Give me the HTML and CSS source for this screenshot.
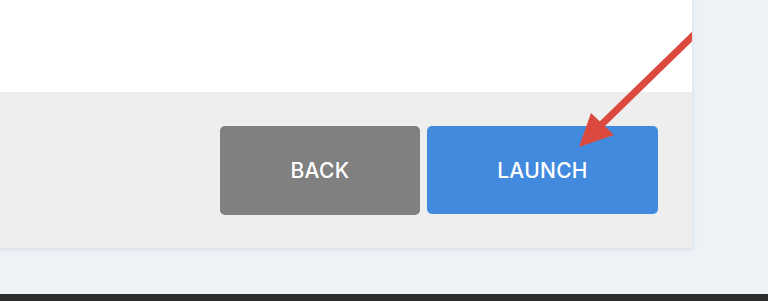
FILE: index.html
```html
<!DOCTYPE html>
<html>
<head>
<meta charset="utf-8">
<link rel="stylesheet" href="styles.css">
</head>
<body>
<div class="page">
  <div class="panel">
    <div class="content"></div>
    <div class="footer">
      <button class="btn btn-back">BACK</button>
      <button class="btn btn-launch">LAUNCH</button>
    </div>
    <svg class="arrow" width="692" height="248" viewBox="0 0 692 248" xmlns="http://www.w3.org/2000/svg">
      <line x1="702" y1="27" x2="598" y2="128" stroke="#dc4a3f" stroke-width="7"/>
      <polygon points="579,147 591,113 614,135" fill="#dc4a3f"/>
    </svg>
  </div>
  <div class="spacer"></div>
  <div class="taskbar"></div>
</div>
</body>
</html>
```

FILE: styles.css
```css
html, body {
  margin: 0;
  padding: 0;
  width: 768px;
  height: 301px;
  overflow: hidden;
  background: #edf1f6;
}
.page {
  display: flex;
  flex-direction: column;
  height: 301px;
  background: linear-gradient(to bottom, #edf2f7, #eef2f7);
}
.panel {
  position: relative;
  width: 692px;
  height: 248px;
  display: flex;
  flex-direction: column;
  overflow: hidden;
  box-shadow: 0 1px 4px rgba(150, 165, 185, 0.35);
  border-radius: 0 0 3px 0;
}
.content {
  height: 92px;
  background: #ffffff;
}
.footer {
  flex: 1;
  background: #eeeeee;
  display: flex;
  justify-content: flex-end;
  align-items: center;
  gap: 7px;
  padding: 0 34px;
}
.btn {
  height: 88px;
  border: none;
  border-radius: 5px;
  color: #ffffff;
  font-family: "Inter", "Liberation Sans", sans-serif;
  font-weight: 500;
  font-size: 21px;
  letter-spacing: 0.3px;
  padding: 0;
  margin: 0;
}
.btn-back {
  width: 200px;
  background: #808080;
  box-shadow: 0 1px 0 #7c8089;
}
.btn-launch {
  width: 231px;
  background: #418add;
}
.arrow {
  position: absolute;
  left: 0;
  top: 0;
}
.spacer {
  flex: 1;
}
.taskbar {
  height: 7px;
  background: #2c2c2c;
}
```
